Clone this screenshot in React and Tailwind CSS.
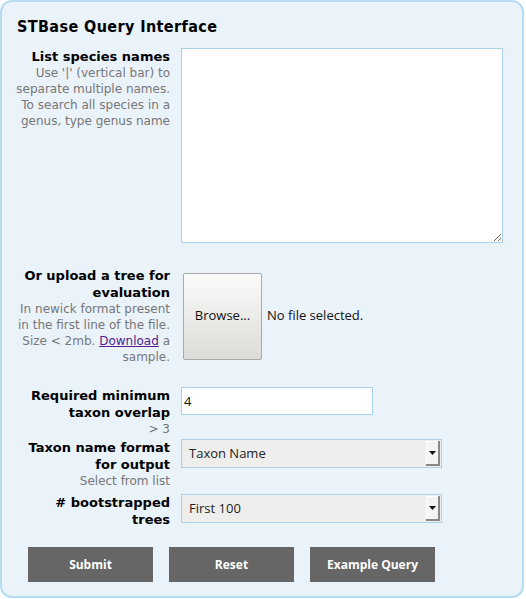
import React from "react";

const Label = ({ title, hint }) => (
  <div className="w-[160px] shrink-0 text-right">
    <div className="pl-[8px] text-[13px] font-bold leading-[17px] text-black">{title}</div>
    {hint && <div className="text-[12px] leading-[16px] text-[#777]">{hint}</div>}
  </div>
);

const SelectBox = ({ value }) => (
  <div className="flex h-[29px] w-[261px] items-center border border-[#a9d2ea] bg-[#eeeeec] pl-[7px] font-['Open_Sans',sans-serif] text-[13px] text-[#222]">
    <span className="flex-1">{value}</span>
    <div className="mr-[1px] flex h-[25px] w-[14px] items-center justify-center border-r-2 border-b-2 border-[#888] bg-[#f4f4f2] shadow-[inset_1px_1px_0_#fff]">
      <svg width="7" height="4" viewBox="0 0 7 4">
        <path d="M0 0h7L3.5 4z" fill="#111" />
      </svg>
    </div>
  </div>
);

export default function App() {
  return (
    <div className="h-[599px] w-[526px] bg-white font-['DejaVu_Sans',Verdana,sans-serif]">
      <div className="h-[598px] w-[524px] rounded-[12px] border-2 border-[#b5dcf0] bg-[#eaf2fa] pl-[8px] pt-[14px]">
        <h1 className="pl-[7px] font-['DejaVu_Sans_Condensed','DejaVu_Sans',sans-serif] text-[16px] font-bold leading-[22px] tracking-[0.4px] text-black">
          STBase Query Interface
        </h1>

        <div className="mt-[10px] flex gap-[11px]">
          <Label
            title="List species names"
            hint="Use '|' (vertical bar) to separate multiple names. To search all species in a genus, type genus name"
          />
          <textarea className="h-[195px] w-[322px] resize-y border border-[#a9d2ea] bg-white outline-none" />
        </div>

        <div className="mt-[24px] flex items-center gap-[11px]">
          <div className="w-[160px] shrink-0 text-right">
            <div className="pl-[8px] text-[13px] font-bold leading-[17px] text-black">Or upload a tree for evaluation</div>
            <div className="pl-[8px] text-[12px] leading-[16px] text-[#777]">
              In newick format present in the first line of the file. Size &lt; 2mb.{" "}
              <a href="#" className="text-[#551a8b] underline">Download</a> a sample.
            </div>
          </div>
          <div className="flex items-center font-['Open_Sans',sans-serif] text-[13px] text-[#111]">
            <button className="ml-[2px] h-[87px] w-[79px] rounded-[2px] border border-[#aaa] bg-gradient-to-b from-[#fbfbfa] to-[#dcdcd8]">
              Browse...
            </button>
            <span className="ml-[5px]">No file selected.</span>
          </div>
        </div>

        <div className="mt-[22px] flex gap-[11px]">
          <Label title="Required minimum taxon overlap" hint="> 3" />
          <input
            defaultValue="4"
            className="h-[28px] w-[192px] border border-[#a9d2ea] bg-white px-[2px] font-['Open_Sans',sans-serif] text-[13px] text-[#111] outline-none"
          />
        </div>

        <div className="mt-[2px] flex gap-[11px]">
          <Label title="Taxon name format for output" hint="Select from list" />
          <SelectBox value="Taxon Name" />
        </div>

        <div className="mt-[5px] flex gap-[11px]">
          <Label title="# bootstrapped trees" />
          <SelectBox value="First 100" />
        </div>

        <div className="mt-[19px] flex gap-[16px] pl-[18px] font-['Open_Sans',sans-serif]">
          {["Submit", "Reset", "Example Query"].map((b) => (
            <button key={b} className="h-[35px] w-[125px] bg-[#666] text-[12px] font-bold text-white">
              {b}
            </button>
          ))}
        </div>
      </div>
    </div>
  );
}
